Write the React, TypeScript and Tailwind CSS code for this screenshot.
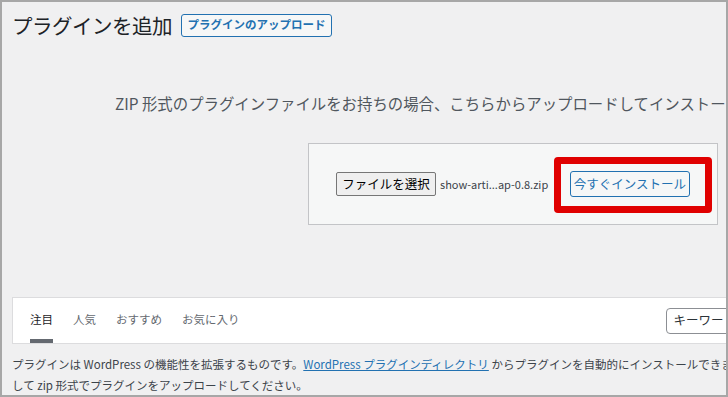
import React from 'react';

const FONT = "[font-family:'Noto_Sans_CJK_JP',sans-serif]";

const tabs = ['注目', '人気', 'おすすめ', 'お気に入り'];

/**
 * プラグイン追加画面（アップロード）
 */
const App: React.FC = () => {
  return (
    <div
      className={`relative w-[728px] h-[397px] overflow-hidden bg-[#f0f0f1] border-2 border-[#a7a7a7] ${FONT}`}
    >
      {/* 見出し */}
      <div className="flex items-center h-[30px] mt-[8px] ml-[10px]">
        <h1 className="text-[20.5px] leading-[30px] text-[#1d2327] tracking-[-0.5px]">プラグインを追加</h1>
        <button className="ml-[9px] w-[151px] h-[23px] border border-[#2271b1] rounded-[3px] bg-[#f6f7f7] text-[#2271b1] text-[11.5px] font-semibold leading-none">
          プラグインのアップロード
        </button>
      </div>

      {/* 説明 */}
      <p className="mt-[52px] pl-[113px] h-[22px] leading-[22px] text-[15.4px] text-[#50575e] whitespace-nowrap">
        ZIP 形式のプラグインファイルをお持ちの場合、こちらからアップロードしてインストールできます。
      </p>

      {/* アップロードフォーム */}
      <div className="mt-[29px] ml-[306px] w-[410px] h-[82px] border border-[#c3c4c7] bg-[#f6f7f7] flex items-center pl-[27px]">
        <button className="w-[100px] h-[24px] border border-[#767676] rounded-[2px] bg-[#efefef] text-[12.5px] text-black leading-none">
          ファイルを選択
        </button>
        <span className="ml-[4px] w-[113px] text-[11px] text-[#3c434a] whitespace-nowrap">show-arti...ap-0.8.zip</span>
        <button className="ml-[17px] w-[120px] h-[26px] border border-[#2271b1] rounded-[3px] bg-[#f6f7f7] text-[#2271b1] text-[12.5px] leading-none">
          今すぐインストール
        </button>
      </div>

      {/* 注釈の赤枠 */}
      <div className="absolute left-[552px] top-[155px] w-[158px] h-[56px] border-[7px] border-[#e00000] rounded-[4px]" />

      {/* フィルターバー */}
      <div className="mt-[72px] ml-[10px] w-[800px] h-[47px] border border-[#dcdcde] bg-white flex items-stretch pl-[17px]">
        <div className="flex gap-[20px]">
          {tabs.map((t, i) => (
            <div
              key={t}
              className={`flex items-center border-t-[3px] border-b-4 border-t-transparent text-[11.5px] ${
                i === 0 ? 'border-b-[#646970] text-[#1d2327]' : 'border-b-transparent text-[#646970]'
              }`}
            >
              {t}
            </div>
          ))}
        </div>
        <div className="ml-[426px] self-center w-[100px] h-[26px] border border-[#8c8f94] rounded-[4px] bg-white flex items-center pl-[7px] text-[12.5px] text-[#2c3338]">
          キーワード
        </div>
      </div>

      {/* 補足テキスト */}
      <div className="mt-[10px] ml-[10px] text-[11.5px] leading-[21px] text-[#3c434a] whitespace-nowrap">
        <p>
          プラグインは WordPress の機能性を拡張するものです。
          <a className="text-[#2271b1] underline">WordPress プラグインディレクトリ</a>
          {' '}からプラグインを自動的にインストールできます。または、このページ上部のボタンをクリック
        </p>
        <p>して zip 形式でプラグインをアップロードしてください。</p>
      </div>
    </div>
  );
};

export default App;
